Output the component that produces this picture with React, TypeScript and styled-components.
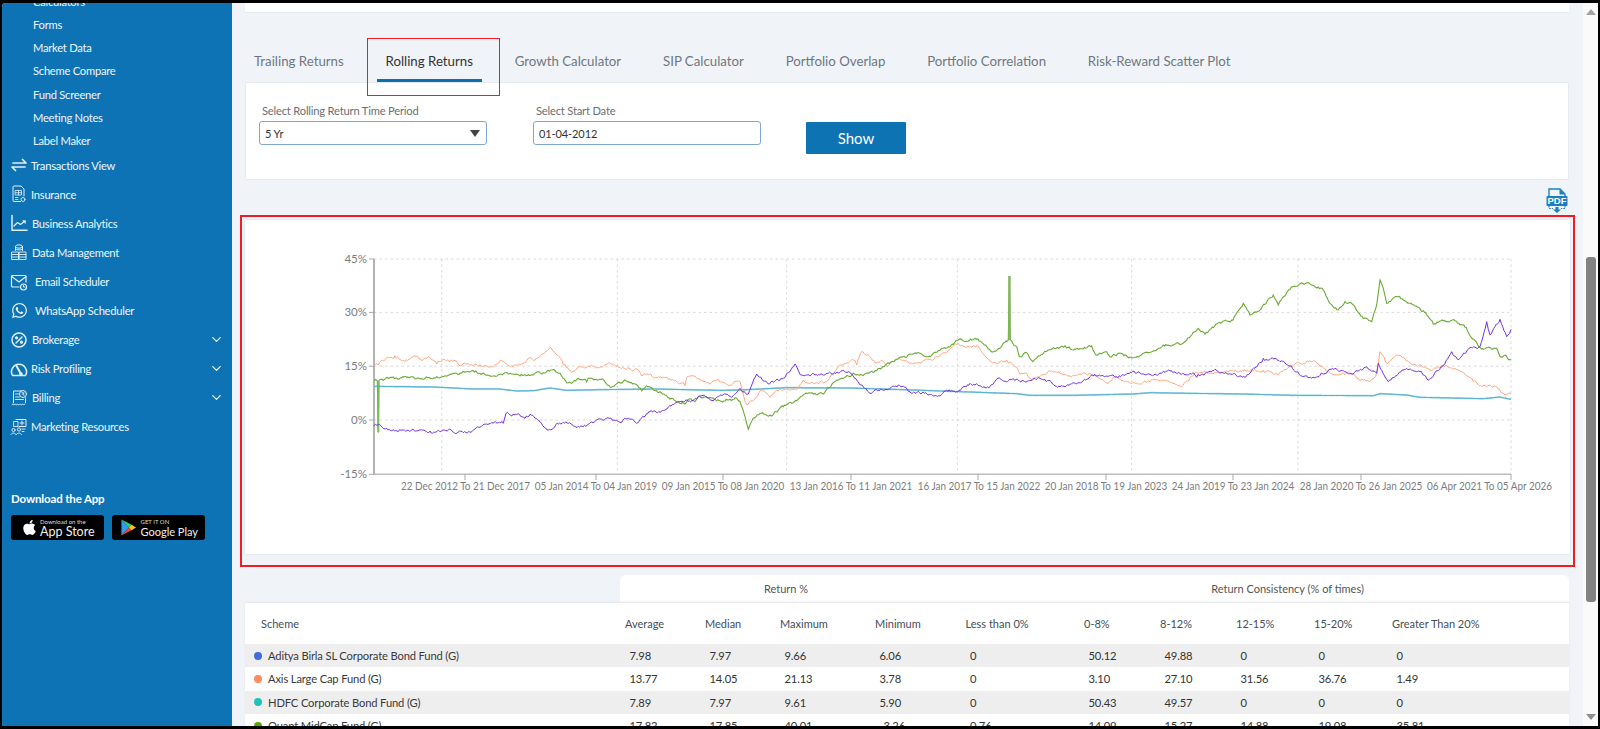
import React from "react";
import styled, { createGlobalStyle } from "styled-components";
import { FaApple, FaWhatsapp } from "react-icons/fa";
import { ChevronDown } from "lucide-react";

const Global = createGlobalStyle`
  html, body { margin: 0; padding: 0; background: #000; overflow: hidden; }
  * { box-sizing: border-box; }
  body { font-family: Lato, "Liberation Sans", sans-serif; }
`;

const Frame = styled.div`
  width: 1600px; height: 729px; padding: 3px 2px; background: #000; overflow: hidden;
`;
const Screen = styled.div`
  width: 100%; height: 100%; display: flex; overflow: hidden; border-radius: 4px 0 0 0; background: #f0f4f9;
`;
const Sidebar = styled.aside`
  width: 230px; flex: none; background: #0d73b5; color: #fff; overflow: hidden;
`;
const SubList = styled.div`margin-top: -13.5px;`;
const SubItem = styled.div`
  height: 23.3px; line-height: 23.3px; padding-left: 31px; font-size: 11.2px; letter-spacing: -0.25px; color: #eef6fb;
`;
const MainList = styled.div`margin-top: -2px;`;
const MainItem = styled.div`
  position: relative; height: 29.1px; display: flex; align-items: center; font-size: 11.2px; letter-spacing: -0.25px; color: #eef6fb;
  padding-left: 7px; padding-right: 8px;
`;
const IconSlot = styled.span`
  width: 20px; height: 20px; flex: none; display: flex; align-items: center; justify-content: center; color: #e4f0f8;
`;
const ItemLabel = styled.span<{ $indent: number }>`
  margin-left: ${(p) => p.$indent}px; flex: 1;
`;
const Download = styled.div`margin: 49.5px 0 0 9px;`;
const DownloadTitle = styled.div`
  font-size: 11.5px; font-weight: 700; letter-spacing: -0.15px; line-height: 16px; color: #fff;
`;
const Badges = styled.div`display: flex; gap: 7.500px; margin-top: 8px;`;
const Badge = styled.div`
  width: 93px; height: 25px; background: #000; border-radius: 3px; display: flex; align-items: center;
  padding-left: 9.500px; color: #fff;
`;
const BadgeMark = styled.span`
  width: 19.500px; flex: none; display: flex; align-items: center;
`;
const BadgeText = styled.div`display: flex; flex-direction: column; line-height: 1; white-space: nowrap;`;
const BadgeSmall = styled.span`font-size: 6px; line-height: 7px; color: #ddd;`;
const BadgeBig = styled.span<{ $size: number }>`font-size: ${(p) => p.$size}px; line-height: 13px; color: #f0f0f0;`;

const Main = styled.main`
  flex: 1; min-width: 0; padding: 0 14px 0 13px; overflow: hidden;
`;
const TopCard = styled.div`
  height: 10px; background: #fff; border-bottom: 1px solid #e6e9ee;
`;
const Tabs = styled.nav`
  display: flex; gap: 23.800px; margin-top: 25px; height: 44px;
`;
const Tab = styled.div<{ $active?: boolean }>`
  position: relative; padding: 0 9px 0; height: 44px; line-height: 46px; font-size: 13.250px; white-space: nowrap;
  color: ${(p) => (p.$active ? "#333" : "#6f7780")};
  border-bottom: 3px solid ${(p) => (p.$active ? "#0d6fb0" : "transparent")};
`;
const TabMark = styled.span`
  position: absolute; left: -10px; right: -18px; top: 0; bottom: -17px; border: 1.500px solid #ee1c25; pointer-events: none;
`;
const FilterCard = styled.section`
  height: 98px; background: #fff; border: 1px solid #e6e9ee; border-radius: 2px; padding: 18px 0 0 13px;
  display: flex; gap: 46px;
`;
const Field = styled.div`width: 228px;`;
const FieldLabel = styled.div`
  height: 20px; line-height: 20px; padding-left: 3px; font-size: 11.200px; letter-spacing: -0.2px; color: #6a6f75;
`;
const SelectBox = styled.div`
  height: 24px; border: 1px solid #80a8cc; border-radius: 3px; display: flex; align-items: center; justify-content: space-between;
  padding: 0 6px 0 5px; font-size: 11px; letter-spacing: -0.1px; color: #333; background: #fff;
`;
const Caret = styled.span`
  width: 0; height: 0; border-left: 5.500px solid transparent; border-right: 5.500px solid transparent; border-top: 7px solid #444;
`;
const DateInput = styled.input`
  display: block; width: 100%; height: 24px; border: 1px solid #80a8cc; border-radius: 3px; padding: 0 5px;
  font: 11px Lato, sans-serif; letter-spacing: -0.1px; color: #333; background: #fff; outline: none;
`;
const ShowButton = styled.button`
  width: 100px; height: 32px; margin-top: 21px; margin-left: -1px; border: none; border-radius: 1px; background: #0d73b3; color: #fff;
  font: 15px Lato, sans-serif;
`;
const PdfRow = styled.div`
  height: 35px; display: flex; justify-content: flex-end; padding: 7px 1px 0 0;
`;
const ChartMark = styled.div`
  margin: 0 -6px 0 -5px; height: 352px; border: 2px solid #ee1c25; padding: 3px 3px 11px;
`;
const ChartCard = styled.section`
  height: 334px; background: #fff; border-top: 0; box-shadow: 0 0 2px #d4d8de;
`;
const ChartSvg = styled.svg`display: block;`;
const AxisText = styled.text`
  font-family: Lato, sans-serif; font-size: 11.500px; fill: #7d7d7d;
`;
const TableHeadTabs = styled.div`
  margin: 8px 0 0 375px; height: 28px; background: #fff; border-radius: 6px 6px 0 0; display: flex;
  font-size: 11px; color: #555; border-bottom: 1px solid #eef0f2; white-space: nowrap;
`;
const HeadTab = styled.div<{ $w: number; $pad?: number }>`
  flex: none; width: ${(p) => p.$w}px; padding-left: ${(p) => p.$pad ?? 0}px; text-align: center; line-height: 28px;
`;
const Table = styled.div`background: #fff; box-shadow: 0 -1px 2px #e2e5ea;`;
const cols = "380px 80px 75px 95px 90.5px 118.5px 76px 76px 78px 78px 1fr";
const HeadRow = styled.div`
  display: grid; grid-template-columns: ${cols}; height: 41px; padding-bottom: 1px; align-items: center; font-size: 11px; color: #454d58;
`;
const HeadCell = styled.div<{ $first?: boolean }>`padding-left: ${(p) => (p.$first ? 16 : 0)}px;`;
const Row = styled.div<{ $alt: boolean }>`
  display: grid; grid-template-columns: ${cols}; height: 23.300px; align-items: center; font-size: 11.200px; letter-spacing: -0.15px; color: #333;
  background: ${(p) => (p.$alt ? "#eeeeee" : "#fff")};
`;
const SchemeCell = styled.div`display: flex; align-items: center; gap: 6px; padding-left: 9px; color: #3a3a3a;`;
const Dot = styled.span<{ $c: string }>`width: 8px; height: 8px; border-radius: 50%; background: ${(p) => p.$c};`;
const ValueCell = styled.div`padding-left: 4.500px;`;

const ScrollTrack = styled.div`
  width: 15px; flex: none; background: #fafafa; display: flex; flex-direction: column; align-items: center; position: relative;
`;
const ArrowUp = styled.span`
  margin-top: 6px; width: 0; height: 0; border-left: 5px solid transparent; border-right: 5px solid transparent; border-bottom: 6px solid #a3a3a3;
`;
const Thumb = styled.div`
  margin-top: 242px; width: 10px; height: 345px; border-radius: 3px; background: #828282;
`;
const ArrowDown = styled.span`
  margin-top: 112px; width: 0; height: 0; border-left: 5px solid transparent; border-right: 5px solid transparent; border-top: 6px solid #8f8f8f;
`;

/* ---------- chart data, in page pixels ---------- */
type Pt = [number, number];
const p4 = (a: Pt[]): Pt[] => a.map(([x, y]) => [320 + x / 3, 240 + y / 3]);
const p5 = (a: Pt[]): Pt[] => a.map(([x, y]) => [740 + x / 3, 240 + y / 3]);
const p6 = (a: Pt[]): Pt[] => a.map(([x, y]) => [1150 + x / 3, 240 + y / 3]);

const orange: Pt[] = [
  ...p4([[162,378],[175,375],[205,352],[225,347],[255,365],[285,349],[305,362],[325,350],[350,372],[365,363],[405,362],[420,377],[445,371],[480,374],[515,380],[545,362],[575,377],[600,375],[625,355],[645,360],[670,342],[690,322],[710,345],[730,375],[755,398],[775,382],[810,380],[835,383],[865,369],[900,382],[950,387],[965,408],[985,403],[1000,412],[1030,412],[1060,420],[1095,437],[1100,413],[1125,408],[1170,433],[1190,420],[1230,435],[1245,424]]),
  ...p5([[0,425],[20,495],[45,475],[65,452],[90,472],[110,450],[170,447],[190,420],[225,430],[255,425],[295,380],[340,360],[350,375],[365,335],[385,345],[410,368],[425,360],[440,378],[470,358],[540,368],[590,350],[650,315],[680,322],[715,318],[730,342],[765,368],[800,360],[825,380],[840,403],[860,400],[875,420],[935,392],[990,408],[1050,400],[1105,430],[1120,412],[1160,425],[1200,432]]),
  ...p6([[0,425],[50,422],[95,440],[135,398],[200,398],[270,392],[340,390],[385,405],[420,378],[490,362],[540,398],[600,400],[625,415],[660,425],[680,400],[690,335],[710,370],[750,345],[780,368],[840,390],[880,378],[920,390],[970,425],[1010,440],[1040,440],[1065,465],[1083,462]]),
];
const green: Pt[] = [
  ...p4([[162,422],[172,422],[175,578],[177,422],[205,415],[260,412],[300,417],[350,410],[395,403],[455,392],[480,400],[520,408],[570,400],[600,408],[640,405],[695,390],[720,400],[740,428],[755,430],[775,415],[800,425],[810,415],[850,418],[875,442],[915,420],[945,432],[965,452],[980,437],[1020,455],[1050,477],[1075,485],[1095,492],[1105,478],[1125,485],[1135,470],[1170,472],[1190,483],[1230,478],[1250,475]]),
  ...p5([[0,485],[15,530],[25,568],[40,535],[60,520],[90,525],[130,500],[170,482],[195,462],[250,462],[290,420],[340,400],[355,405],[410,392],[470,358],[530,340],[565,350],[610,325],[625,320],[655,300],[710,298],[760,335],[805,300],[808,108],[811,300],[830,320],[838,350],[860,338],[878,365],[925,330],[975,317],[1000,330],[1055,318],[1068,345],[1100,335],[1110,350],[1140,340],[1170,352],[1200,347]]),
  ...p6([[0,337],[40,315],[95,312],[145,265],[165,282],[205,248],[245,240],[280,190],[300,225],[330,210],[370,165],[385,195],[420,148],[470,128],[520,150],[540,190],[565,210],[585,185],[610,195],[640,235],[665,245],[680,195],[690,120],[700,145],[710,190],[745,170],[780,190],[820,212],[850,252],[880,242],[915,242],[945,262],[990,322],[1040,325],[1050,350],[1065,345],[1083,360]]),
];
const purple: Pt[] = [
  ...p4([[162,558],[175,553],[200,565],[250,570],[330,573],[370,570],[430,578],[480,562],[500,552],[550,550],[558,520],[575,528],[590,523],[615,535],[630,523],[660,545],[685,570],[715,552],[745,550],[790,560],[830,540],[860,535],[900,547],[925,535],[950,550],[990,515],[1020,517],[1075,485],[1130,478],[1145,467],[1180,483],[1210,464],[1235,472]]),
  ...p5([[0,445],[25,462],[50,402],[85,432],[130,415],[165,372],[185,405],[225,405],[265,400],[325,395],[355,425],[390,460],[475,435],[510,455],[600,468],[620,450],[650,455],[690,430],[750,440],[770,417],[850,422],[900,415],[960,440],[1010,432],[1060,408],[1130,410],[1175,398]]),
  ...p6([[0,403],[60,393],[135,405],[140,412],[195,388],[235,402],[285,412],[340,355],[375,355],[420,378],[455,408],[485,415],[540,388],[610,402],[650,380],[680,400],[685,370],[715,425],[770,385],[810,395],[835,420],[880,375],[905,335],[925,360],[960,322],[990,320],[1010,245],[1020,285],[1050,238],[1070,290],[1083,268]]),
];
const teal: Pt[] = [
  ...p4([[162,439],[340,441],[460,447],[540,447],[590,453],[640,452],[690,444],[740,451],[840,449],[1000,447],[1100,449],[1200,451]]),
  ...p5([[0,450],[140,443],[330,444],[490,449],[660,455],[830,461],[870,466],[1000,466],[1180,462]]),
  ...p6([[0,458],[120,460],[280,462],[430,466],[670,467],[690,461],[770,465],[810,472],[1000,476],[1050,471],[1083,478]]),
];

function jitter(pts: Pt[], amp: number, seed: number): string {
  let s = seed;
  const rnd = () => {
    s = (s * 16807) % 2147483647;
    return s / 2147483647;
  };
  let n = 0;
  const out: string[] = [];
  pts.forEach(([x, y], i) => {
    const next = pts[i + 1];
    out.push(`${x.toFixed(1)},${y.toFixed(1)}`);
    if (!next) return;
    const dx = next[0] - x;
    if (dx < 3) return;
    const steps = Math.floor(dx / 1.2);
    for (let k = 1; k < steps; k++) {
      const t = k / steps;
      n = n * 0.6 + (rnd() - 0.5) * amp;
      out.push(`${(x + dx * t).toFixed(1)},${(y + (next[1] - y) * t + n).toFixed(1)}`);
    }
  });
  return out.join(" ");
}

const yTicks: [number, string][] = [[259, "45%"], [312.4, "30%"], [366.2, "15%"], [420, "0%"], [474.3, "-15%"]];
const vGrid = [441.7, 617.3, 786.7, 957.3, 1131.7, 1298, 1511];
const xTicks: [number, number, number, string][] = [
  [465, 465.5, 129, "22 Dec 2012 To 21 Dec 2017"],
  [596, 596, 122.5, "05 Jan 2014 To 04 Jan 2019"],
  [723, 723, 122.5, "09 Jan 2015 To 08 Jan 2020"],
  [851, 851, 122.5, "13 Jan 2016 To 11 Jan 2021"],
  [978, 979, 122.5, "16 Jan 2017 To 15 Jan 2022"],
  [1106, 1106, 122.5, "20 Jan 2018 To 19 Jan 2023"],
  [1233, 1233, 122.5, "24 Jan 2019 To 23 Jan 2024"],
  [1361, 1361, 122.5, "28 Jan 2020 To 26 Jan 2025"],
  [1511, 1489.5, 125, "06 Apr 2021 To 05 Apr 2026"],
];

const Chart = () => (
  <ChartSvg width="1325" height="334" viewBox="245 220 1325 334">
    {yTicks.slice(0, 4).map(([y]) => (
      <line key={y} x1="374" x2="1511" y1={y} y2={y} stroke="#d9d9d9" strokeDasharray="2.5 3" />
    ))}
    {vGrid.map((x) => (
      <line key={x} x1={x} x2={x} y1="259" y2="474" stroke="#d9d9d9" strokeDasharray="2.5 3" />
    ))}
    {yTicks.map(([y, t]) => (
      <g key={t}>
        <line x1="369" x2="374" y1={y} y2={y} stroke="#a8a8a8" />
        <AxisText x="367" y={y + 4} textAnchor="end">{t}</AxisText>
      </g>
    ))}
    <line x1="374" x2="374" y1="259" y2="474.5" stroke="#a0a0a0" strokeWidth="1.6" />
    <line x1="374" x2="1511" y1="474.3" y2="474.3" stroke="#bdbdbd" strokeWidth="1.6" />
    {xTicks.map(([x, cx, w, t]) => (
      <g key={t}>
        <line x1={x} x2={x} y1="474" y2="480" stroke="#a8a8a8" />
        <AxisText x={cx} y="489.5" textAnchor="middle" textLength={w} lengthAdjust="spacingAndGlyphs">{t}</AxisText>
      </g>
    ))}
    <polyline points={jitter(teal, 0, 11)} fill="none" stroke="#9ad8e0" strokeWidth="1.7" />
    <polyline points={jitter(teal, 0, 11)} fill="none" stroke="#4aa6d4" strokeWidth="0.9" />
    <polyline points={jitter(orange, 2.6, 77)} fill="none" stroke="#ffa780" strokeWidth="1" />
    <polyline points={jitter(green, 2.4, 1234)} fill="none" stroke="#6bab35" strokeWidth="1.1" />
    <line x1="378.3" x2="378.3" y1="381" y2="432" stroke="#79bb55" strokeWidth="2" />
    <line x1="1009.5" x2="1009.5" y1="276" y2="340" stroke="#85b562" strokeWidth="2.4" />
    <polyline points={jitter(purple, 2.6, 4242)} fill="none" stroke="#7030e4" strokeWidth="1" />
  </ChartSvg>
);

/* ---------- icons ---------- */
const line = { fill: "none", stroke: "currentColor", strokeWidth: 1.2, strokeLinecap: "round" as const, strokeLinejoin: "round" as const };
const Svg = ({ children }: { children: React.ReactNode }) => (
  <svg width="18" height="18" viewBox="0 0 18 18" {...line}>{children}</svg>
);
const Transfer = () => (
  <Svg><path strokeWidth="1.7" d="M3 7h13l-3.5-3.5M15 11H2l3.5 3.5" /></Svg>
);
const InsuranceIcon = () => (
  <Svg>
    <path d="M10.500 16.500H4a1 1 0 0 1-1-1V2a1 1 0 0 1 1-1h7l3 3v7" strokeWidth="1" />
    <path d="M5.500 5.500h6v4.500h-6zM5.500 7.700h6M8.500 5.500v4.500M5.500 12.500h2.500M5.500 14.500h2.500" strokeWidth=".8" />
    <circle cx="13" cy="14.500" r="2" strokeWidth=".9" />
  </Svg>
);
const AnalyticsIcon = () => (
  <Svg>
    <path strokeWidth="1.500" d="M2 1.500V16.200H17" />
    <path d="M4 12l3.500-3.500 3 2L15 7M13 6.800h2.200V9" />
  </Svg>
);
const DataIcon = () => (
  <Svg>
    <ellipse cx="9" cy="3.500" rx="3.500" ry="1.700" strokeWidth="1" />
    <path d="M5.500 3.500v4M12.500 3.500v4M5.500 6c1 1.300 6 1.300 7 0" strokeWidth="1" />
    <path d="M2 9h6.500v7.500H2zM9.500 9H16v7.500H9.500zM2 11.500h6.500M2 14h6.500M9.500 11.500H16M9.500 14H16" strokeWidth=".9" />
  </Svg>
);
const MailIcon = () => (
  <Svg>
    <path d="M9 14H2.500a1 1 0 0 1-1-1V3.500a1 1 0 0 1 1-1H15a1 1 0 0 1 1 1V9" />
    <path d="M1.800 3.500l7.200 5.500 7-5.500" />
    <circle cx="13.500" cy="14" r="3" />
    <path d="M13.500 12.500V14h1.200" strokeWidth="1" />
  </Svg>
);
const PercentIcon = () => (
  <Svg>
    <circle cx="9" cy="9" r="7" strokeWidth="1.500" />
    <path d="M6 12l6-6" strokeWidth="1.500" />
    <circle cx="6.500" cy="6.800" r="1" fill="currentColor" />
    <circle cx="11.500" cy="11.200" r="1" fill="currentColor" />
  </Svg>
);
const GaugeIcon = () => (
  <Svg>
    <path strokeWidth="1.500" d="M2.500 15.500a7.500 7.500 0 1 1 13 0z" />
    <path strokeWidth="2" d="M6.500 6l4.500 8" />
    <circle cx="11" cy="14" r="1.200" fill="currentColor" />
  </Svg>
);
const BillIcon = () => (
  <Svg>
    <path d="M3.500 14V2h8M15.500 9v5" strokeWidth="1" />
    <path d="M2 15.500c1-1.200 1.500 1.200 2.500 0s1.500 1.200 2.500 0 1.500 1.200 2.500 0 1.500 1.200 2.500 0 1.500 1.200 2.500 0" strokeWidth="1" />
    <circle cx="13" cy="5" r="3.500" strokeWidth="1" />
    <path d="M5.500 5h3M5.500 8h4M5.500 10.500h8" strokeWidth=".9" />
    <path d="M12 3.700h2M12 5h2M13 3.700c1 .5 1 1.300 0 1.300l1 1.500" strokeWidth=".7" />
  </Svg>
);
const MarketingIcon = () => (
  <Svg>
    <path d="M6 1.500h10v7H9" strokeWidth="1" />
    <path d="M10 5h4M12 3v4" strokeWidth="1" />
    <rect x="4" y="3.500" width="4" height="5" strokeWidth=".9" />
    <circle cx="3.500" cy="12" r="1.600" strokeWidth=".9" />
    <circle cx="9" cy="11.500" r="1.600" strokeWidth=".9" />
    <path d="M1 16.500c.5-2 4-2 5 0M6.500 16.500c.5-2 4-2 5 0M12 11h3M12 13.500h2" strokeWidth=".9" />
  </Svg>
);
const PdfWord = styled.text`
  font: 700 9.500px "Liberation Sans", sans-serif; fill: #fff;
`;
const PdfIcon = () => (
  <svg width="22" height="26" viewBox="0 0 22 26">
    <path d="M3 11V2h11l5 5v4" fill="none" stroke="#1a7fc1" strokeWidth="1.400" />
    <path d="M13.500 2v5.500H19z" fill="#1a7fc1" />
    <rect x="0.500" y="9" width="21" height="10" rx="1" fill="#1a7fc1" />
    <PdfWord x="11" y="17.200" textAnchor="middle">PDF</PdfWord>
    <path d="M3 19v2.500h4M19 19v2.500h-4" fill="none" stroke="#1a7fc1" strokeWidth="1.200" strokeDasharray="1.600 1" />
    <path d="M9.500 20h3v2.500H15L11 26l-4-3.500h2.500z" fill="#1a7fc1" />
  </svg>
);
const PlayLogo = () => (
  <svg width="15" height="17" viewBox="0 0 17 19">
    <path d="M0.500 0.500v18L9 9.500z" fill="#2f9bf0" />
    <path d="M0.500 0.500L9 9.500l3-3z" fill="#30d27b" />
    <path d="M0.500 18.500L9 9.500l3 3z" fill="#ef4444" />
    <path d="M12 6.500L17 9.500l-5 3-3-3z" fill="#ffc61a" />
  </svg>
);

const subs = ["Calculators", "Forms", "Market Data", "Scheme Compare", "Fund Screener", "Meeting Notes", "Label Maker"];
const menu: { label: string; icon: React.ReactNode; indent: number; chevron?: boolean }[] = [
  { label: "Transactions View", icon: <Transfer />, indent: 2 },
  { label: "Insurance", icon: <InsuranceIcon />, indent: 2 },
  { label: "Business Analytics", icon: <AnalyticsIcon />, indent: 3 },
  { label: "Data Management", icon: <DataIcon />, indent: 3 },
  { label: "Email Scheduler", icon: <MailIcon />, indent: 6 },
  { label: "WhatsApp Scheduler", icon: <FaWhatsapp size={17} />, indent: 6 },
  { label: "Brokerage", icon: <PercentIcon />, indent: 3, chevron: true },
  { label: "Risk Profiling", icon: <GaugeIcon />, indent: 2, chevron: true },
  { label: "Billing", icon: <BillIcon />, indent: 3, chevron: true },
  { label: "Marketing Resources", icon: <MarketingIcon />, indent: 2 },
];
const tabs = ["Trailing Returns", "Rolling Returns", "Growth Calculator", "SIP Calculator", "Portfolio Overlap", "Portfolio Correlation", "Risk-Reward Scatter Plot"];
const heads = ["Average", "Median", "Maximum", "Minimum", "Less than 0%", "0-8%", "8-12%", "12-15%", "15-20%", "Greater Than 20%"];
const rows: { name: string; color: string; v: string[] }[] = [
  { name: "Aditya Birla SL Corporate Bond Fund (G)", color: "#4169e1", v: ["7.98", "7.97", "9.66", "6.06", "0", "50.12", "49.88", "0", "0", "0"] },
  { name: "Axis Large Cap Fund (G)", color: "#ff8c5a", v: ["13.77", "14.05", "21.13", "3.78", "0", "3.10", "27.10", "31.56", "36.76", "1.49"] },
  { name: "HDFC Corporate Bond Fund (G)", color: "#20c1bb", v: ["7.89", "7.97", "9.61", "5.90", "0", "50.43", "49.57", "0", "0", "0"] },
  { name: "Quant MidCap Fund (G)", color: "#5aa700", v: ["17.82", "17.85", "40.01", "-3.26", "0.76", "14.09", "15.27", "14.88", "19.08", "35.81"] },
];

export default function App() {
  return (
    <Frame>
      <Global />
      <Screen>
        <Sidebar>
          <SubList>
            {subs.map((s) => <SubItem key={s}>{s}</SubItem>)}
          </SubList>
          <MainList>
            {menu.map((m) => (
              <MainItem key={m.label}>
                <IconSlot>{m.icon}</IconSlot>
                <ItemLabel $indent={m.indent}>{m.label}</ItemLabel>
                {m.chevron && <ChevronDown size={15} strokeWidth={2} />}
              </MainItem>
            ))}
          </MainList>
          <Download>
            <DownloadTitle>Download the App</DownloadTitle>
            <Badges>
              <Badge>
                <BadgeMark><FaApple size={17} /></BadgeMark>
                <BadgeText>
                  <BadgeSmall>Download on the</BadgeSmall>
                  <BadgeBig $size={12.5}>App Store</BadgeBig>
                </BadgeText>
              </Badge>
              <Badge>
                <BadgeMark><PlayLogo /></BadgeMark>
                <BadgeText>
                  <BadgeSmall>GET IT ON</BadgeSmall>
                  <BadgeBig $size={11}>Google Play</BadgeBig>
                </BadgeText>
              </Badge>
            </Badges>
          </Download>
        </Sidebar>
        <Main>
          <TopCard />
          <Tabs>
            {tabs.map((t) => (
              <Tab key={t} $active={t === "Rolling Returns"}>
                {t}
                {t === "Rolling Returns" && <TabMark />}
              </Tab>
            ))}
          </Tabs>
          <FilterCard>
            <Field>
              <FieldLabel>Select Rolling Return Time Period</FieldLabel>
              <SelectBox>5 Yr<Caret /></SelectBox>
            </Field>
            <Field>
              <FieldLabel>Select Start Date</FieldLabel>
              <DateInput value="01-04-2012" readOnly />
            </Field>
            <ShowButton>Show</ShowButton>
          </FilterCard>
          <PdfRow><PdfIcon /></PdfRow>
          <ChartMark>
            <ChartCard><Chart /></ChartCard>
          </ChartMark>
          <TableHeadTabs>
            <HeadTab $w={332}>Return %</HeadTab>
            <HeadTab $w={617} $pad={54}>Return Consistency (% of times)</HeadTab>
          </TableHeadTabs>
          <Table>
            <HeadRow>
              <HeadCell $first>Scheme</HeadCell>
              {heads.map((h) => <HeadCell key={h}>{h}</HeadCell>)}
            </HeadRow>
            {rows.map((r, i) => (
              <Row key={r.name} $alt={i % 2 === 0}>
                <SchemeCell><Dot $c={r.color} />{r.name}</SchemeCell>
                {r.v.map((v, k) => <ValueCell key={k}>{v}</ValueCell>)}
              </Row>
            ))}
          </Table>
        </Main>
        <ScrollTrack>
          <ArrowUp />
          <Thumb />
          <ArrowDown />
        </ScrollTrack>
      </Screen>
    </Frame>
  );
}
